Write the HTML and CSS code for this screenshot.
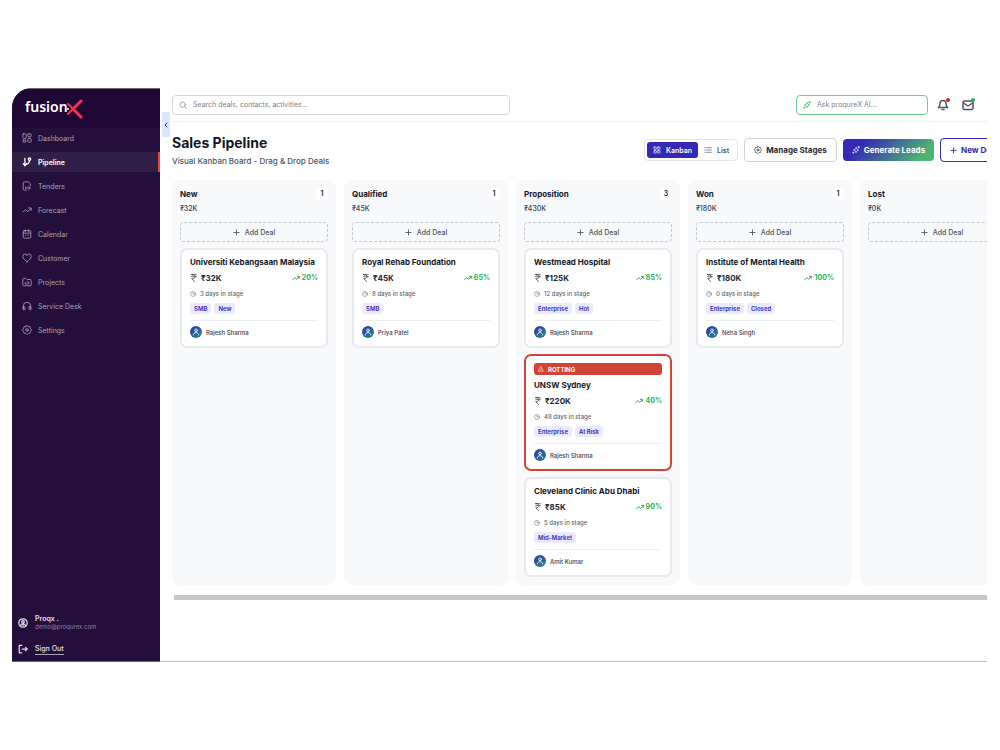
FILE: index.html
```
<!DOCTYPE html>
<html lang="en">
<head>
    <meta charset="UTF-8">
    <title>Sales Pipeline</title>
    <link rel="stylesheet" href="styles.css">
</head>
<body>
<!-- icon sprite -->
<svg class="sprite" aria-hidden="true">
    <symbol id="i-grid" viewBox="0 0 24 24"><rect x="3" y="3" width="7" height="7" rx="1"/><rect x="14" y="3" width="7" height="7" rx="1"/><rect x="3" y="14" width="7" height="7" rx="1"/><rect x="14" y="14" width="7" height="7" rx="1"/></symbol>
    <symbol id="i-dashboard" viewBox="0 0 24 24"><rect x="2" y="2" width="8" height="11" rx="2"/><rect x="14" y="2" width="8" height="7" rx="2"/><rect x="2" y="17" width="8" height="5" rx="2"/><rect x="14" y="13" width="8" height="9" rx="2"/></symbol>
    <symbol id="i-pipeline" viewBox="0 0 24 24"><path d="M7 3v17M3 16l4 5 4-5M7 18c7 0 11-4 11-10"/><circle cx="18" cy="5" r="3"/></symbol>
    <symbol id="i-tender" viewBox="0 0 24 24"><path d="M10 22H6a3 3 0 0 1-3-3V5a3 3 0 0 1 3-3h9l5 5v4"/><path d="M9 17h10M16 13l4 4-4 4M9 17v-3"/></symbol>
    <symbol id="i-trend" viewBox="0 0 24 24"><path d="M2 17l6-6 6 5 8-8"/><path d="M16 7h6v6"/></symbol>
    <symbol id="i-calendar" viewBox="0 0 24 24"><rect x="3" y="4" width="18" height="18" rx="2"/><path d="M3 10h18M8 2v5M16 2v5M8 15h.1M12 15h.1M16 15h.1"/></symbol>
    <symbol id="i-heart" viewBox="0 0 24 24"><path d="M12 21C7 17 2 13 2 8.500a5 5 0 0 1 10-2 5 5 0 0 1 10 2C22 13 17 17 12 21z"/></symbol>
    <symbol id="i-folder" viewBox="0 0 24 24"><path d="M2 5a2 2 0 0 1 2-2h5l3 3h8a2 2 0 0 1 2 2v11a2 2 0 0 1-2 2H4a2 2 0 0 1-2-2z"/><path d="M8 13v4h4M16 17v-5h-4"/></symbol>
    <symbol id="i-headset" viewBox="0 0 24 24"><path d="M3 19v-7a9 9 0 0 1 18 0v7"/><rect x="3" y="14" width="4" height="7" rx="1"/><rect x="17" y="14" width="4" height="7" rx="1"/></symbol>
    <symbol id="i-gear" viewBox="0 0 24 24"><path d="M12 1l3 3 4 0 1 4 3 4-3 4-1 4-4 0-3 3-3-3-4 0-1-4-3-4 3-4 1-4 4 0z"/><circle cx="12" cy="12" r="3"/></symbol>
    <symbol id="i-account" viewBox="0 0 24 24"><circle cx="12" cy="12" r="10"/><circle cx="12" cy="9" r="3"/><path d="M6 18c2-5 10-5 12 0M12 12v6"/></symbol>
    <symbol id="i-logout" viewBox="0 0 24 24"><path d="M9 3H3v18h6M10 12h12M18 8l4 4-4 4"/></symbol>
    <symbol id="i-search" viewBox="0 0 24 24"><circle cx="11" cy="11" r="8"/><path d="M17 17l5 5"/></symbol>
    <symbol id="i-spark" viewBox="0 0 24 24"><path d="M13 5l2 5 5 2-5 2-3 6-2-6-6-2 6-3zM20 1v5M17 3h6M4 18v4M2 20h4"/></symbol>
    <symbol id="i-bell" viewBox="0 0 24 24"><path d="M3 17c3-3 3-5 3-8a6 6 0 0 1 12 0c0 3 0 5 3 8z"/><path d="M10 21h4"/></symbol>
    <symbol id="i-mail" viewBox="0 0 24 24"><rect x="2" y="4" width="20" height="17" rx="3"/><path d="M3 8l9 6 9-6"/></symbol>
    <symbol id="i-list" viewBox="0 0 24 24"><path d="M8 5h14M8 12h14M8 19h14M2 5h2M2 12h2M2 19h2"/></symbol>
    <symbol id="i-plus" viewBox="0 0 24 24"><path d="M12 3v18M3 12h18"/></symbol>
    <symbol id="i-rupee" viewBox="0 0 24 24"><path d="M5 2h14M5 8h14M5 2h4c8 0 8 12 0 12H5l9 9"/></symbol>
    <symbol id="i-clock" viewBox="0 0 24 24"><circle cx="12" cy="12" r="10"/><path d="M12 6v6h5"/></symbol>
    <symbol id="i-user" viewBox="0 0 24 24"><circle cx="12" cy="7" r="4"/><path d="M4 21c1-10 15-10 16 0"/></symbol>
    <symbol id="i-warn" viewBox="0 0 24 24"><path d="M12 3l10 18H2zM12 10v5M12 18v.1"/></symbol>
    <symbol id="i-left" viewBox="0 0 24 24"><path d="M16 4l-8 8 8 8"/></symbol>
</svg>

<div class="app">
    <aside class="sidebar">
        <div class="logo">
            <span>fusion</span>
            <svg class="logo-x" viewBox="0 0 17 20"><path d="M15 2L7 10l8 8"/><path class="thin" d="M2 5l5 5-5 5"/><circle cx="2" cy="10" r="1"/></svg>
        </div>
        <nav class="menu">
            <a href="#"><svg class="icon"><use href="#i-dashboard"/></svg>Dashboard</a>
            <a href="#" class="active"><svg class="icon"><use href="#i-pipeline"/></svg>Pipeline</a>
            <a href="#"><svg class="icon"><use href="#i-tender"/></svg>Tenders</a>
            <a href="#"><svg class="icon"><use href="#i-trend"/></svg>Forecast</a>
            <a href="#"><svg class="icon"><use href="#i-calendar"/></svg>Calendar</a>
            <a href="#"><svg class="icon"><use href="#i-heart"/></svg>Customer</a>
            <a href="#"><svg class="icon"><use href="#i-folder"/></svg>Projects</a>
            <a href="#"><svg class="icon"><use href="#i-headset"/></svg>Service Desk</a>
            <a href="#"><svg class="icon"><use href="#i-gear"/></svg>Settings</a>
        </nav>
        <div class="account">
            <div class="profile">
                <svg class="icon"><use href="#i-account"/></svg>
                <div>
                    <div class="name">Proqx .</div>
                    <div class="email">demo@proqurex.com</div>
                </div>
            </div>
            <a href="#" class="signout"><svg class="icon"><use href="#i-logout"/></svg><span>Sign Out</span></a>
        </div>
    </aside>

    <main class="main">
        <button class="collapse" aria-label="Collapse menu"><svg class="icon"><use href="#i-left"/></svg></button>
        <header class="topbar">
            <label class="search">
                <svg class="icon"><use href="#i-search"/></svg>
                <input type="text" aria-label="Search" placeholder="Search deals, contacts, activities...">
            </label>
            <div class="tools">
                <label class="search ask">
                    <svg class="icon"><use href="#i-spark"/></svg>
                    <input type="text" aria-label="Ask AI" placeholder="Ask proqureX AI...">
                </label>
                <button class="notify" aria-label="Notifications"><svg class="icon"><use href="#i-bell"/></svg><span class="dot red"></span></button>
                <button class="notify" aria-label="Messages"><svg class="icon"><use href="#i-mail"/></svg><span class="dot green"></span></button>
            </div>
        </header>

        <section class="heading">
            <div>
                <h1>Sales Pipeline</h1>
                <p>Visual Kanban Board - Drag &amp; Drop Deals</p>
            </div>
            <div class="actions">
                <div class="toggle">
                    <button class="on"><svg class="icon"><use href="#i-grid"/></svg>Kanban</button>
                    <button><svg class="icon"><use href="#i-list"/></svg>List</button>
                </div>
                <button class="btn"><svg class="icon"><use href="#i-gear"/></svg>Manage Stages</button>
                <button class="btn generate"><svg class="icon"><use href="#i-spark"/></svg>Generate Leads</button>
                <button class="btn new"><svg class="icon"><use href="#i-plus"/></svg>New Deal</button>
            </div>
        </section>

        <section class="board">
            <div class="column">
                <div class="column-head"><h2>New</h2><span class="count">1</span></div>
                <div class="total">₹32K</div>
                <button class="add"><svg class="icon"><use href="#i-plus"/></svg>Add Deal</button>
                <article class="card">
                    <h3>Universiti Kebangsaan Malaysia</h3>
                    <div class="value"><svg class="icon"><use href="#i-rupee"/></svg><b>₹32K</b><span class="chance"><svg class="icon"><use href="#i-trend"/></svg>20%</span></div>
                    <div class="days"><svg class="icon"><use href="#i-clock"/></svg>3 days in stage</div>
                    <div class="tags"><span>SMB</span><span>New</span></div>
                    <div class="owner"><span class="avatar"><svg class="icon"><use href="#i-user"/></svg></span>Rajesh Sharma</div>
                </article>
            </div>

            <div class="column">
                <div class="column-head"><h2>Qualified</h2><span class="count">1</span></div>
                <div class="total">₹45K</div>
                <button class="add"><svg class="icon"><use href="#i-plus"/></svg>Add Deal</button>
                <article class="card">
                    <h3>Royal Rehab Foundation</h3>
                    <div class="value"><svg class="icon"><use href="#i-rupee"/></svg><b>₹45K</b><span class="chance"><svg class="icon"><use href="#i-trend"/></svg>65%</span></div>
                    <div class="days"><svg class="icon"><use href="#i-clock"/></svg>8 days in stage</div>
                    <div class="tags"><span>SMB</span></div>
                    <div class="owner"><span class="avatar"><svg class="icon"><use href="#i-user"/></svg></span>Priya Patel</div>
                </article>
            </div>

            <div class="column">
                <div class="column-head"><h2>Proposition</h2><span class="count">3</span></div>
                <div class="total">₹430K</div>
                <button class="add"><svg class="icon"><use href="#i-plus"/></svg>Add Deal</button>
                <article class="card">
                    <h3>Westmead Hospital</h3>
                    <div class="value"><svg class="icon"><use href="#i-rupee"/></svg><b>₹125K</b><span class="chance"><svg class="icon"><use href="#i-trend"/></svg>85%</span></div>
                    <div class="days"><svg class="icon"><use href="#i-clock"/></svg>12 days in stage</div>
                    <div class="tags"><span>Enterprise</span><span>Hot</span></div>
                    <div class="owner"><span class="avatar"><svg class="icon"><use href="#i-user"/></svg></span>Rajesh Sharma</div>
                </article>
                <article class="card rotting">
                    <div class="banner"><svg class="icon"><use href="#i-warn"/></svg>ROTTING</div>
                    <h3>UNSW Sydney</h3>
                    <div class="value"><svg class="icon"><use href="#i-rupee"/></svg><b>₹220K</b><span class="chance"><svg class="icon"><use href="#i-trend"/></svg>40%</span></div>
                    <div class="days"><svg class="icon"><use href="#i-clock"/></svg>48 days in stage</div>
                    <div class="tags"><span>Enterprise</span><span>At Risk</span></div>
                    <div class="owner"><span class="avatar"><svg class="icon"><use href="#i-user"/></svg></span>Rajesh Sharma</div>
                </article>
                <article class="card">
                    <h3>Cleveland Clinic Abu Dhabi</h3>
                    <div class="value"><svg class="icon"><use href="#i-rupee"/></svg><b>₹85K</b><span class="chance"><svg class="icon"><use href="#i-trend"/></svg>90%</span></div>
                    <div class="days"><svg class="icon"><use href="#i-clock"/></svg>5 days in stage</div>
                    <div class="tags"><span>Mid-Market</span></div>
                    <div class="owner"><span class="avatar"><svg class="icon"><use href="#i-user"/></svg></span>Amit Kumar</div>
                </article>
            </div>

            <div class="column">
                <div class="column-head"><h2>Won</h2><span class="count">1</span></div>
                <div class="total">₹180K</div>
                <button class="add"><svg class="icon"><use href="#i-plus"/></svg>Add Deal</button>
                <article class="card">
                    <h3>Institute of Mental Health</h3>
                    <div class="value"><svg class="icon"><use href="#i-rupee"/></svg><b>₹180K</b><span class="chance"><svg class="icon"><use href="#i-trend"/></svg>100%</span></div>
                    <div class="days"><svg class="icon"><use href="#i-clock"/></svg>0 days in stage</div>
                    <div class="tags"><span>Enterprise</span><span>Closed</span></div>
                    <div class="owner"><span class="avatar"><svg class="icon"><use href="#i-user"/></svg></span>Neha Singh</div>
                </article>
            </div>

            <div class="column">
                <div class="column-head"><h2>Lost</h2></div>
                <div class="total">₹0K</div>
                <button class="add"><svg class="icon"><use href="#i-plus"/></svg>Add Deal</button>
            </div>
        </section>
        <div class="scrollbar"></div>
    </main>
</div>
</body>
</html>
```
FILE: styles.css
```
*{
    box-sizing: border-box;
}

body{
    margin: 0;
    padding: 88px 13px 88px 12px;
    min-height: 100vh;
    display: flex;
    background: #fff;
    color: #111827;
    font-family: Inter, "Noto Sans", sans-serif;
    font-size: 7px;
}

h1, h2, h3, p{
    margin: 0;
}

a{
    color: inherit;
    text-decoration: none;
}

button, input{
    font: inherit;
    color: inherit;
    border: 0;
    background: none;
    padding: 0;
}

.sprite{
    position: absolute;
    width: 0;
    height: 0;
}

.icon{
    width: 8px;
    height: 8px;
    flex: none;
    fill: none;
    stroke: currentColor;
    stroke-width: 2;
    stroke-linecap: round;
    stroke-linejoin: round;
}

.app{
    flex: 1;
    min-width: 0;
    display: flex;
    border-top-left-radius: 20px;
    overflow: hidden;
}

/* sidebar */
.sidebar{
    flex: 0 0 148px;
    display: flex;
    flex-direction: column;
    background: #240f3b;
    color: #aaa0b5;
    border: 1px solid #73677f;
    border-width: 1px 0;
}

.logo{
    display: flex;
    align-items: center;
    height: 39px;
    padding: 0 0 4px 13px;
    background: #1e0635;
    color: #fff;
    font: 600 14px "Noto Sans", sans-serif;
}

.logo-x{
    width: 17px;
    height: 20px;
    margin-left: -2px;
    margin-top: 4px;
    stroke: #fa3150;
    stroke-width: 3;
    stroke-linecap: round;
    stroke-linejoin: round;
}

.logo-x path{
    fill: none;
}

.logo-x .thin{
    stroke-width: 2;
}

.logo-x circle{
    fill: #fff;
    stroke: none;
}

.menu{
    display: flex;
    flex-direction: column;
    gap: 4px;
    flex: 1;
}

.menu a{
    display: flex;
    align-items: center;
    gap: 6px;
    height: 20px;
    padding-left: 10px;
}

.menu .icon,
.account .icon{
    width: 10px;
    height: 10px;
}

.menu .active .icon,
.account .icon{
    stroke-width: 3;
}

.menu .active{
    color: #fff;
    font-weight: 600;
    background: #321f47;
    border-right: 2px solid #f04444;
}

.account{
    display: flex;
    flex-direction: column;
    gap: 12px;
    padding: 0 6px 6px;
    color: #e6e1ea;
}

.profile, .signout{
    display: flex;
    align-items: center;
    gap: 7px;
}

.name{
    font-weight: 600;
    line-height: 9px;
}

.email{
    font-size: 6px;
    line-height: 8px;
    color: #8f829c;
}

.signout span{
    line-height: 11px;
    border-bottom: 1px solid #aaa0b5;
    font-weight: 500;
}

/* main */
.main{
    flex: 1;
    min-width: 0;
    position: relative;
    overflow: hidden;
    border-bottom: 1px solid #bbb;
}

.collapse{
    position: absolute;
    left: 2px;
    top: 24px;
    width: 8px;
    height: 25px;
    display: flex;
    align-items: center;
    justify-content: center;
    background: #dbe6fc;
    color: #3428b5;
}

.collapse .icon{
    width: 6px;
    height: 6px;
    stroke-width: 4;
}

.topbar{
    display: flex;
    align-items: center;
    justify-content: space-between;
    height: 34px;
    padding: 0 13px 0 12px;
    border-bottom: 1px solid #eff0f3;
}

.search{
    display: flex;
    align-items: center;
    gap: 6px;
    flex: 0 1 338px;
    min-width: 0;
    height: 20px;
    padding: 0 6px;
    border: 1px solid #d3d6dc;
    border-radius: 4px;
    color: #7a8190;
}

.search input{
    flex: 1;
    min-width: 0;
    outline: 0;
}

.search input::placeholder{
    color: #7a8190;
    opacity: 1;
}

.tools{
    display: flex;
    align-items: center;
    gap: 13px;
}

.ask{
    flex: 0 0 132px;
    border-color: #6cce92;
    margin-right: -4px;
}

.ask .icon{
    color: #22b45a;
}

.notify{
    position: relative;
    display: flex;
    color: #4b5563;
}

.notify .icon{
    width: 12px;
    height: 12px;
    stroke-width: 3;
}

.dot{
    position: absolute;
    top: -1px;
    right: -1px;
    width: 4px;
    height: 4px;
    border-radius: 50%;
}

.red{
    background: #dc1c1c;
}

.green{
    background: #22b45a;
}

.heading{
    display: flex;
    justify-content: space-between;
    padding: 11px 12px;
}

h1{
    font-size: 14px;
    line-height: 20px;
}

.heading p{
    font-size: 8px;
    font-weight: 500;
    line-height: 16px;
    color: #4b5563;
}

/* last button runs past the right edge */
.actions{
    display: flex;
    align-items: center;
    gap: 6px;
    flex: none;
    margin-right: -33px;
    padding-bottom: 2px;
}

.toggle{
    display: flex;
    height: 22px;
    padding: 2px;
    border: 1px solid #e3e5ea;
    border-radius: 4px;
}

.toggle button{
    display: flex;
    align-items: center;
    gap: 5px;
    padding: 0 6px;
    border-radius: 3px;
    font-weight: 600;
    color: #4b5563;
}

.toggle .on{
    background: #3428b5;
    color: #fff;
}

.btn{
    display: flex;
    align-items: center;
    gap: 4px;
    height: 24px;
    padding: 0 9px;
    border: 1px solid #cfd2d9;
    border-radius: 4px;
    font-size: 8px;
    font-weight: 700;
    color: #1f2937;
}

.generate{
    height: 22px;
    border: 0;
    background: linear-gradient(135deg, #3428b5 20%, #4cb573 85%);
    color: #fff;
}

.new{
    border-color: #3428b5;
    color: #3428b5;
}

/* board */
.board{
    display: flex;
    gap: 8px;
    padding-left: 12px;
    overflow: hidden;
}

.column{
    flex: 0 0 164px;
    display: flex;
    flex-direction: column;
    padding: 8px;
    border-radius: 8px;
    background: #f8f9fb;
}

.column-head{
    display: flex;
    align-items: center;
    justify-content: space-between;
    height: 12px;
}

h2{
    font-size: 8px;
}

.count{
    width: 12px;
    line-height: 12px;
    border-radius: 4px;
    background: #fff;
    text-align: center;
    font-weight: 600;
}

.total{
    margin: 4px 0 8px;
    line-height: 10px;
    font-weight: 500;
    color: #374151;
}

.add{
    display: flex;
    align-items: center;
    justify-content: center;
    gap: 5px;
    height: 20px;
    border: 1px dashed #c3c7cf;
    border-radius: 4px;
    font-weight: 500;
    color: #4b5563;
}

.add .icon,
.new .icon{
    width: 7px;
    height: 7px;
    stroke-width: 3;
}

.card{
    margin-top: 6px;
    padding: 6px 8px 8px;
    border: 2px solid #e8e9ee;
    border-radius: 7px;
    background: #fff;
}

h3{
    font-size: 8px;
    line-height: 12px;
    white-space: nowrap;
}

.value{
    display: flex;
    align-items: center;
    gap: 3px;
    margin-top: 4px;
    line-height: 12px;
    font-size: 8px;
    color: #1f2937;
}

.chance{
    display: flex;
    align-items: center;
    gap: 2px;
    margin-left: auto;
    font-size: 7px;
    font-weight: 700;
    color: #22b45a;
}

.chance .icon{
    stroke-width: 3;
}

.days{
    display: flex;
    align-items: center;
    gap: 4px;
    margin-top: 5px;
    line-height: 10px;
    font-size: 6px;
    font-weight: 500;
    color: #5b6472;
}

.days .icon{
    width: 6px;
    height: 6px;
}

.tags{
    display: flex;
    gap: 3px;
    margin: 4px 0 6px;
}

.tags span{
    padding: 0 4px;
    line-height: 11px;
    border-radius: 3px;
    background: #ebe9fc;
    color: #3428b5;
    font-size: 6px;
    font-weight: 600;
}

.owner{
    display: flex;
    align-items: center;
    gap: 4px;
    padding-top: 5px;
    border-top: 1px solid #eceef1;
    font-size: 6px;
    font-weight: 500;
    color: #374151;
}

.avatar{
    display: flex;
    align-items: center;
    justify-content: center;
    width: 12px;
    height: 12px;
    border-radius: 50%;
    background: linear-gradient(135deg, #2c2fb0, #26917c);
    color: #dbe6fc;
}

.avatar .icon{
    width: 8px;
    height: 8px;
    stroke-width: 3;
}

.rotting{
    border-color: #d04437;
}

.banner{
    display: flex;
    align-items: center;
    gap: 4px;
    height: 12px;
    margin: 1px 0 4px;
    padding-left: 4px;
    border-radius: 3px;
    background: #d04437;
    color: #fff;
    font-size: 6px;
    font-weight: 700;
}

.banner .icon{
    width: 6px;
    height: 6px;
}

.scrollbar{
    height: 5px;
    margin: 10px 0 0 14px;
    background: #c6c6c6;
}
```
